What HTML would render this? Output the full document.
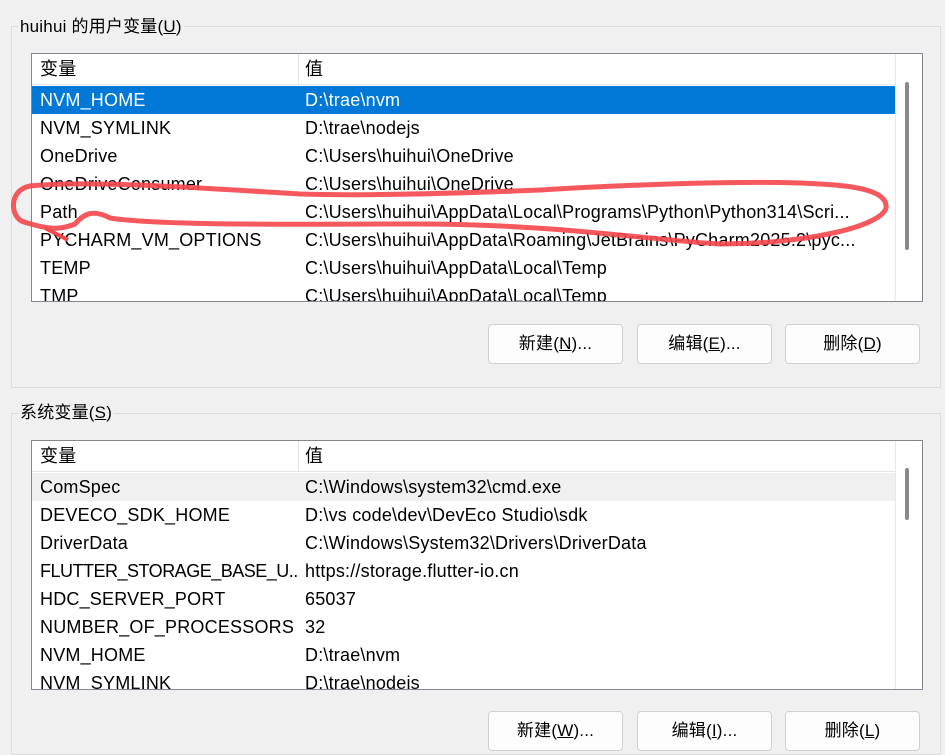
<!DOCTYPE html>
<html><head><meta charset="utf-8"><style>
body{margin:0;width:945px;height:737px;background:#f0f0f0;overflow:hidden;position:relative;font-family:"Liberation Sans","Noto Sans CJK SC",sans-serif;font-size:18px;letter-spacing:0.2px;color:#000}
.grp{position:absolute;border:1px solid #dcdcdc;left:11px;width:928px}
.lbl{position:absolute;background:#f0f0f0;padding:0 2px;left:18px;font-size:17px;line-height:22px}
.list{position:absolute;left:31px;width:890px;background:#fff;border:1px solid #828790;overflow:hidden}
.row{position:absolute;left:0;width:863px;height:28px;line-height:28px;white-space:nowrap}
.row span{position:absolute}
.c1{left:8px;width:258px;overflow:hidden}.c2{left:273px;width:588px;overflow:hidden}
.hdr{border-bottom:1px solid #e5e5e5;height:30px;line-height:30px}
.hdr .sep{position:absolute;left:266px;top:0;width:1px;height:30px;background:#e5e5e5}
.sel{background:#0078d7;color:#fff}
.hov{background:#f0f0f0}
.sb{position:absolute;right:0;top:0;width:26px;height:100%;border-left:1px solid #e8e8e8;background:#fff}
.thumb{position:absolute;left:9px;width:4px;background:#8a8a8a;border-radius:2px}
.btn{position:absolute;width:133px;height:38px;background:#fdfdfd;border:1px solid #d0d0d0;border-radius:4px;text-align:center;line-height:38px;font-size:17px}
u{text-decoration:underline}
</style></head><body>
<div class="grp" style="top:26px;height:360px"></div>
<div class="lbl" style="top:16px">huihui 的用户变量(<u>U</u>)</div>
<div class="list" style="top:53px;height:247px">
 <div class="row hdr" style="top:0"><span class="c1">变量</span><div class="sep"></div><span class="c2">值</span></div>
 <div class="row sel" style="top:32px"><span class="c1">NVM_HOME</span><span class="c2">D:\trae\nvm</span></div>
 <div class="row" style="top:60px"><span class="c1">NVM_SYMLINK</span><span class="c2">D:\trae\nodejs</span></div>
 <div class="row" style="top:88px"><span class="c1">OneDrive</span><span class="c2">C:\Users\huihui\OneDrive</span></div>
 <div class="row" style="top:116px"><span class="c1">OneDriveConsumer</span><span class="c2">C:\Users\huihui\OneDrive</span></div>
 <div class="row" style="top:144px"><span class="c1">Path</span><span class="c2">C:\Users\huihui\AppData\Local\Programs\Python\Python314\Scri...</span></div>
 <div class="row" style="top:172px"><span class="c1">PYCHARM_VM_OPTIONS</span><span class="c2">C:\Users\huihui\AppData\Roaming\JetBrains\PyCharm2025.2\pyc...</span></div>
 <div class="row" style="top:200px"><span class="c1">TEMP</span><span class="c2">C:\Users\huihui\AppData\Local\Temp</span></div>
 <div class="row" style="top:228px"><span class="c1">TMP</span><span class="c2">C:\Users\huihui\AppData\Local\Temp</span></div>
 <div class="sb"><div class="thumb" style="top:28px;height:168px"></div></div>
</div>
<div class="btn" style="left:488px;top:324px">新建(<u>N</u>)...</div>
<div class="btn" style="left:637px;top:324px">编辑(<u>E</u>)...</div>
<div class="btn" style="left:785px;top:324px">删除(<u>D</u>)</div>

<div class="grp" style="top:413px;height:340px"></div>
<div class="lbl" style="top:402px">系统变量(<u>S</u>)</div>
<div class="list" style="top:440px;height:248px">
 <div class="row hdr" style="top:0"><span class="c1">变量</span><div class="sep"></div><span class="c2">值</span></div>
 <div class="row hov" style="top:32px"><span class="c1">ComSpec</span><span class="c2">C:\Windows\system32\cmd.exe</span></div>
 <div class="row" style="top:60px"><span class="c1">DEVECO_SDK_HOME</span><span class="c2">D:\vs code\dev\DevEco Studio\sdk</span></div>
 <div class="row" style="top:88px"><span class="c1">DriverData</span><span class="c2">C:\Windows\System32\Drivers\DriverData</span></div>
 <div class="row" style="top:116px"><span class="c1" style="letter-spacing:-0.5px">FLUTTER_STORAGE_BASE_U...</span><span class="c2">https://storage.flutter-io.cn</span></div>
 <div class="row" style="top:144px"><span class="c1">HDC_SERVER_PORT</span><span class="c2">65037</span></div>
 <div class="row" style="top:172px"><span class="c1">NUMBER_OF_PROCESSORS</span><span class="c2">32</span></div>
 <div class="row" style="top:200px"><span class="c1">NVM_HOME</span><span class="c2">D:\trae\nvm</span></div>
 <div class="row" style="top:228px"><span class="c1">NVM_SYMLINK</span><span class="c2">D:\trae\nodejs</span></div>
 <div class="sb"><div class="thumb" style="top:27px;height:52px"></div></div>
</div>
<div class="btn" style="left:488px;top:711px">新建(<u>W</u>)...</div>
<div class="btn" style="left:637px;top:711px">编辑(<u>I</u>)...</div>
<div class="btn" style="left:785px;top:711px">删除(<u>L</u>)</div>

<svg style="position:absolute;left:0;top:0" width="945" height="737">
<path d="M300 194 C200 188 90 180 30 186 C8 190 10 218 24 222 C50 230 60 230 75 224 C85 212 95 210 110 218 C160 226 300 224 420 224 C550 224 650 240 720 244 C800 244 880 228 886 208 C888 192 860 186 820 184 C760 180 640 184 540 190 C440 194 360 196 300 194 Z" fill="none" stroke="#f4474d" stroke-width="5" stroke-linecap="round" opacity="0.9"/>
<path d="M45 228 L68 240" stroke="#f4474d" stroke-width="4" fill="none"/>
</svg>
</body></html>
